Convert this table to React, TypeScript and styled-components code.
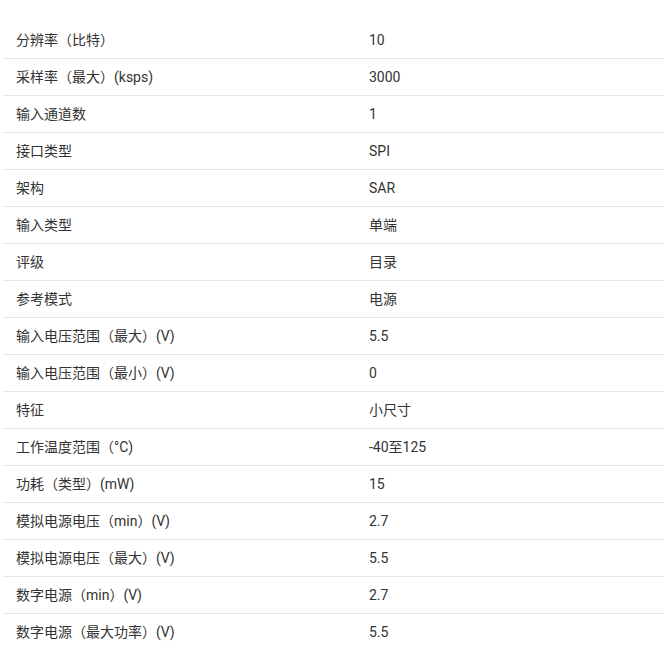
import styled, {createGlobalStyle} from "styled-components";

const Global = createGlobalStyle`
	body{
		margin:0;
		background:#fff;
		font-family: Roboto, "Noto Sans CJK SC", sans-serif;
		color:#333;
	}
`;
const Wrap = styled.div`
	padding-top:22px;
	padding-left:3px;
	overflow:hidden;
`;
const Table = styled.div`
	display:flex;
	flex-direction:column;
	width:661px;
`;
const Row = styled.div`
	display:grid;
	grid-template-columns:353px 1fr;
	height:37px;
	border-bottom:1px solid #e6e6e6;
	box-sizing:border-box;
	align-items:center;
`;
const Cell = styled.div`
	padding-left:13px;
	font-size:14px;
	line-height:20px;
	color:#333;
	white-space:nowrap;
`;

const specs: [string,string][] = [
	["分辨率（比特）","10"],
	["采样率（最大）(ksps)","3000"],
	["输入通道数","1"],
	["接口类型","SPI"],
	["架构","SAR"],
	["输入类型","单端"],
	["评级","目录"],
	["参考模式","电源"],
	["输入电压范围（最大）(V)","5.5"],
	["输入电压范围（最小）(V)","0"],
	["特征","小尺寸"],
	["工作温度范围（°C)","-40至125"],
	["功耗（类型）(mW)","15"],
	["模拟电源电压（min）(V)","2.7"],
	["模拟电源电压（最大）(V)","5.5"],
	["数字电源（min）(V)","2.7"],
	["数字电源（最大功率）(V)","5.5"],
];

function App(){
	return (
		<Wrap>
			<Global/>
			<Table>
				{specs.map(([k,v])=>(
					<Row key={k}>
						<Cell>{k}</Cell>
						<Cell>{v}</Cell>
					</Row>
				))}
			</Table>
		</Wrap>
	);
}
export default App;
